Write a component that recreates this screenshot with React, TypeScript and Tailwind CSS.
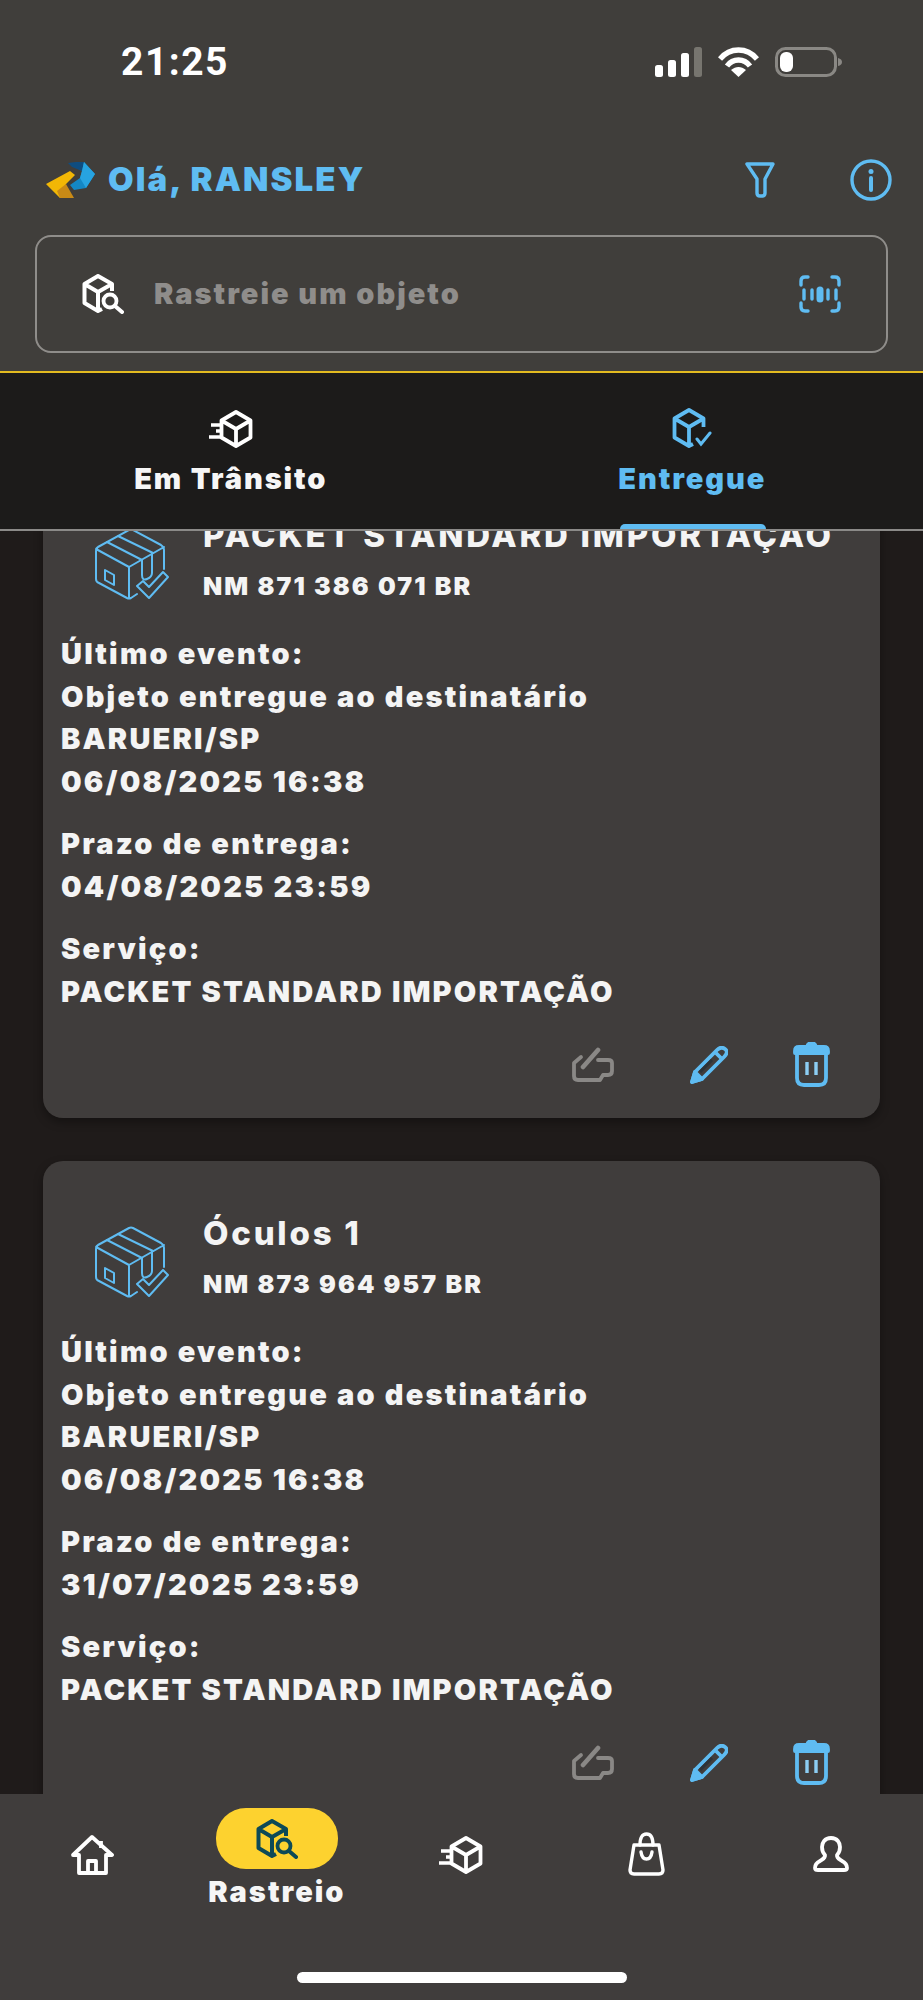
import React from 'react';

const BLUE = '#5fbcf2';

type IconProps = { color?: string; className?: string };

const BoxSearchIcon: React.FC<IconProps> = ({ color = '#fff', className }) => (
  <svg viewBox="0 0 42 40" className={className}>
    <path
      d="M20 35 16 37 2.500 29V10L16 2 30 10V17M2.500 10 16 18 30 10M16 18V37"
      fill="none"
      stroke={color}
      strokeWidth="4"
      strokeLinejoin="round"
    />
    <circle cx="28" cy="27" r="6.500" fill="none" stroke={color} strokeWidth="3.800" />
    <path d="M33 32 40 38" stroke={color} strokeWidth="4" strokeLinecap="round" />
  </svg>
);

const TransitIcon: React.FC<IconProps> = ({ color = '#fff', className }) => (
  <svg viewBox="0 0 44 38" className={className}>
    <path
      d="M27 2 41.500 10.500V27.500L27 36 12.500 27.500V10.500ZM12.500 10.500 27 19 41.500 10.500M27 19V36"
      fill="none"
      stroke={color}
      strokeWidth="3.800"
      strokeLinejoin="round"
    />
    <path d="M2 15H12M7 21H12M0 27H12" stroke={color} strokeWidth="3.400" fill="none" />
  </svg>
);

const DeliveredIcon: React.FC<IconProps> = ({ color = BLUE, className }) => (
  <svg viewBox="0 0 40 40" className={className}>
    <path
      d="M21 36 17 38 2.500 29.500V10.500L17 2 31.500 10.500V19M2.500 10.500 17 19 31.500 10.500M17 19V38"
      fill="none"
      stroke={color}
      strokeWidth="3.800"
      strokeLinejoin="round"
    />
    <path d="M25 31 29 36 38 25" fill="none" stroke={color} strokeWidth="3" strokeLinecap="round" />
  </svg>
);

const FilterIcon: React.FC<IconProps> = ({ className }) => (
  <svg viewBox="0 0 30 36" className={className} fill="none" stroke={BLUE} strokeWidth="3.400" strokeLinejoin="round">
    <path d="M2 2H28L20 17V31Q20 34 17 34H15Q12 34 12 31V17Z" />
  </svg>
);

const InfoIcon: React.FC<IconProps> = ({ className }) => (
  <svg viewBox="0 0 42 42" className={className} fill="none" stroke={BLUE}>
    <circle cx="21" cy="21" r="19" strokeWidth="3.400" />
    <path d="M21 19V31" strokeWidth="4" strokeLinecap="round" />
    <circle cx="21" cy="12.500" r="2.500" fill={BLUE} stroke="none" />
  </svg>
);

const ScanIcon: React.FC<IconProps> = ({ className }) => (
  <svg viewBox="0 0 42 38" className={className} fill="none" stroke={BLUE} strokeWidth="3.400" strokeLinecap="round">
    <path d="M2 10V6Q2 2 6 2H9M33 2H36Q40 2 40 6V10M2 28V32Q2 36 6 36H9M33 36H36Q40 36 40 32V28" />
    <path d="M5 15V24M13 15V24M29 15V24M37 15V24" />
    <path d="M21 15V24" strokeWidth="7" />
  </svg>
);

const LogoIcon: React.FC<IconProps> = ({ className }) => (
  <svg viewBox="0 0 50 38" className={className}>
    <path d="M0 23 24 10 29 14 20 23 14 37Z" fill="#f2b705" />
    <path d="M11 30 20 23 28 37 14 37Z" fill="#c98a16" />
    <path d="M26 4 38 1 49 13 40 27 28 29 24 24 34 17 36 10Z" fill="#1487c4" />
    <path d="M22 2 30 1 38 1 36 10 26 6Z" fill="#0f4d80" />
    <path d="M36 10 38 1 49 13 40 27 34 17Z" fill="#27a3e0" />
  </svg>
);

const SignalIcon: React.FC = () => (
  <svg viewBox="0 0 47 30" className="w-[47px] h-[30px]">
    <rect x="0" y="18" width="8" height="12" rx="2.500" fill="#fff" />
    <rect x="13" y="13" width="8" height="17" rx="2.500" fill="#fff" />
    <rect x="26" y="6" width="8" height="24" rx="2.500" fill="#fff" />
    <rect x="39" y="0" width="8" height="30" rx="2.500" fill="#77756f" />
  </svg>
);

const WifiIcon: React.FC = () => (
  <svg viewBox="0 0 41 30" className="w-[41px] h-[30px]" fill="none" stroke="#fff" strokeWidth="5.400">
    <path d="M2 12C12 0 29 0 39 12" />
    <path d="M9 19C15 11 26 11 32 19" />
    <path d="M20.500 30 13 23C18 19 23 19 28 23Z" fill="#fff" stroke="none" />
  </svg>
);

const BatteryIcon: React.FC = () => (
  <svg viewBox="0 0 67 30" className="w-[67px] h-[30px]" fill="none">
    <rect x="1.500" y="1.500" width="59" height="27" rx="9" stroke="#8a8884" strokeWidth="3" />
    <rect x="5" y="5" width="13" height="20" rx="6" fill="#fff" />
    <path d="M63 11Q67 12 67 15T63 19Z" fill="#8a8884" />
  </svg>
);

const BoxDeliveredIcon: React.FC = () => (
  <svg viewBox="0 0 76 73" className="w-[76px] h-[73px]" fill="none" stroke={BLUE} strokeWidth="2" strokeLinejoin="round" strokeLinecap="round">
    <path d="M36 3Q38 2 40 3L68 18Q71 20 71 23V42M36 3 5 20Q3 21 3 24V52Q3 55 6 56L34 71Q36 72 38 71L44 67M3 22 36 40 71 20M36 40V71" />
    <path d="M14 15 49 33M25 9 60 26" />
    <path d="M49 33V48Q49 54 54 52 59 50 59 46V26" />
    <path d="M12 43 21 48V58L12 53Z" />
    <path d="M44 59 50 54 56 60 70 45 75 50 56 71Z" />
  </svg>
);

const ThumbIcon: React.FC<IconProps> = ({ className }) => (
  <svg viewBox="0 0 43 35" className={className} fill="none" stroke="#8a8886" strokeWidth="3.800" strokeLinejoin="round" strokeLinecap="round">
    <path d="M12 20 27 3" strokeWidth="4.600" />
    <path d="M10 10 3 16V29Q3 33 7 33H29L32 28H37Q41 28 41 24V16Q41 13 37 13H27" />
  </svg>
);

const PencilIcon: React.FC<IconProps> = ({ className }) => (
  <svg viewBox="0 0 38 38" className={className} fill="none" stroke={BLUE} strokeWidth="3.800" strokeLinejoin="round">
    <path d="M2 36 5 26 27 4Q31 0 35 3T34 11L12 33Z" />
    <path d="M2 36 5 26 12 33Z" fill={BLUE} />
    <path d="M26 7 31 12" />
    <path d="M10 26 22 14" stroke="#2c3338" strokeWidth="3" />
  </svg>
);

const TrashIcon: React.FC<IconProps> = ({ className }) => (
  <svg viewBox="0 0 37 45" className={className} fill="none" stroke={BLUE} strokeWidth="3.800" strokeLinejoin="round">
    <path d="M2 11V9Q2 5 6 5H14Q15 1 18.500 1T23 5H31Q35 5 35 9V11Z" fill={BLUE} />
    <path d="M4 11V36Q4 43 11 43H26Q33 43 33 36V11" />
    <path d="M14 20V33M23 20V33" stroke="#8ccdf3" strokeWidth="3.400" />
  </svg>
);

const HomeIcon: React.FC<IconProps> = ({ className }) => (
  <svg viewBox="0 0 43 40" className={className} fill="none" stroke="#fff" strokeWidth="3.800" strokeLinejoin="round">
    <path d="M8 38V20H2L21 2 41 20H35V38Z" />
    <path d="M17 38V26H25V38" />
    <path d="M30 6V13" />
  </svg>
);

const BagIcon: React.FC<IconProps> = ({ className }) => (
  <svg viewBox="0 0 37 44" className={className} fill="none" stroke="#fff" strokeWidth="3.400" strokeLinecap="round" strokeLinejoin="round">
    <path d="M6 13H31L35 38Q35 42 31 42H6Q2 42 2 38Z" />
    <path d="M12 13Q12 2 18.500 2T25 13" />
    <path d="M13 20Q14 27 18.500 27T24 20" />
  </svg>
);

const UserIcon: React.FC<IconProps> = ({ className }) => (
  <svg viewBox="0 0 36 38" className={className} fill="none" stroke="#fff" strokeWidth="3.800" strokeLinejoin="round">
    <path d="M18 3C24.500 3 27 8 27 12 27 16 25 19 24 20 23.500 23 26 24 29 26 33 28 34 31 34 33 34 35 33 35 31 35H5C3 35 2 35 2 33 2 31 3 28 7 26 10 24 12.500 23 12 20 11 19 9 16 9 12 9 8 11.500 3 18 3Z" />
  </svg>
);

type Delivery = {
  title: string;
  code: string;
  prazo: string;
};

const deliveries: Delivery[] = [
  { title: 'PACKET STANDARD IMPORTAÇÃO', code: 'NM 871 386 071 BR', prazo: '04/08/2025 23:59' },
  { title: 'Óculos 1', code: 'NM 873 964 957 BR', prazo: '31/07/2025 23:59' },
];

const DeliveryCard: React.FC<{ item: Delivery }> = ({ item }) => (
  <div className="shrink-0 h-[655px] rounded-[20px] bg-[#403d3c] shadow-[0_4px_10px_rgba(0,0,0,0.35)] pt-[52px] pl-[18px] pr-[18px]">
    <div className="flex pl-[32px]">
      <div className="mt-[12px] w-[110px] shrink-0">
        <BoxDeliveredIcon />
      </div>
      <div>
        <div className="h-[40px] leading-[40px] text-[33px] font-extrabold tracking-[2.750px] text-[#f4f4f4] whitespace-nowrap">{item.title}</div>
        <div className="mt-[10px] h-[42px] leading-[42px] text-[25px] font-black tracking-[2.100px] text-[#f4f4f4]">{item.code}</div>
      </div>
    </div>

    <div className="mt-[26px] text-[29px] font-black leading-[42.500px] tracking-[2.200px] text-[#f4f4f4]">
      <p>Último evento:</p>
      <p>Objeto entregue ao destinatário</p>
      <p>BARUERI/SP</p>
      <p>06/08/2025 16:38</p>
      <p className="mt-[20px]">Prazo de entrega:</p>
      <p>{item.prazo}</p>
      <p className="mt-[20px]">Serviço:</p>
      <p>PACKET STANDARD IMPORTAÇÃO</p>
    </div>

    <div className="mt-[29px] flex items-center justify-end pr-[32px]">
      <ThumbIcon className="w-[43px] h-[35px]" />
      <PencilIcon className="ml-[76px] w-[38px] h-[38px]" />
      <TrashIcon className="ml-[65px] w-[37px] h-[45px]" />
    </div>
  </div>
);

const App: React.FC = () => {
  return (
    <div className="h-[2000px] w-[923px] overflow-hidden flex flex-col bg-[#1f1b1a] font-['Inter',sans-serif]">
      <header className="shrink-0 h-[373px] bg-[#403e3b] border-b-2 border-[#e3bb20]">
        <div className="flex items-center justify-between pt-[47px] pl-[121px] pr-[81px] h-[77px]">
          <span className="font-['Roboto',sans-serif] text-[39px] leading-[30px] font-bold tracking-[1.500px] text-white">21:25</span>
          <div className="flex items-center">
            <SignalIcon />
            <div className="ml-[16px]">
              <WifiIcon />
            </div>
            <div className="ml-[16px]">
              <BatteryIcon />
            </div>
          </div>
        </div>

        <div className="mt-[82px] h-[42px] flex items-center pl-[46px] pr-[31px]">
          <LogoIcon className="w-[50px] h-[38px]" />
          <span className="ml-[12px] text-[33px] font-black tracking-[2.100px] text-[#5fbcf2]">Olá, RANSLEY</span>
          <div className="ml-auto flex items-center">
            <FilterIcon className="w-[30px] h-[36px]" />
            <InfoIcon className="ml-[75px] w-[42px] h-[42px]" />
          </div>
        </div>

        <div className="mt-[34px] mx-[35px] h-[118px] rounded-[16px] border-2 border-[#8f8d8a] flex items-center pl-[45px] pr-[45px]">
          <BoxSearchIcon className="w-[42px] h-[40px]" />
          <span className="ml-[30px] text-[29px] font-black tracking-[2px] text-[#8f8d8b]">Rastreie um objeto</span>
          <ScanIcon className="ml-auto w-[42px] h-[38px]" />
        </div>
      </header>

      <nav className="relative z-10 shrink-0 h-[158px] grid grid-cols-2 bg-[#1c1b1a] border-b-2 border-[#8b8a88]">
        <div className="flex flex-col items-center pt-[37px]">
          <TransitIcon className="w-[44px] h-[38px]" />
          <span className="mt-[12px] text-[29px] leading-[38px] font-black tracking-[1.900px] text-[#f6f6f6]">Em Trânsito</span>
        </div>
        <div className="relative flex flex-col items-center pt-[35px]">
          <DeliveredIcon className="w-[40px] h-[40px]" />
          <span className="mt-[12px] text-[29px] leading-[38px] font-black tracking-[1.900px] text-[#5fbcf2]">Entregue</span>
          <span className="absolute bottom-0 left-[158px] w-[146px] h-[5px] rounded-t-[5px] bg-[#5fbcf2]" />
        </div>
      </nav>

      <main className="flex-1 min-h-0 overflow-hidden px-[43px]">
        <div className="-mt-[68px] flex flex-col gap-[43px]">
          {deliveries.map((item) => (
            <DeliveryCard key={item.code} item={item} />
          ))}
        </div>
      </main>

      <footer className="shrink-0 h-[206px] bg-[#403d3c] flex flex-col">
        <div className="grid grid-cols-5 pt-[14px]">
          <div className="flex justify-center pt-[27px]">
            <HomeIcon className="w-[43px] h-[40px]" />
          </div>
          <div className="flex flex-col items-center">
            <div className="w-[122px] h-[61px] rounded-[30px] bg-[#fdd22f] flex items-center justify-center">
              <BoxSearchIcon color="#0d4a57" className="w-[42px] h-[40px]" />
            </div>
            <span className="mt-[5px] text-[29px] leading-[36px] font-black tracking-[2px] text-[#f6f6f6]">Rastreio</span>
          </div>
          <div className="flex justify-center pt-[28px]">
            <TransitIcon className="w-[44px] h-[38px]" />
          </div>
          <div className="flex justify-center pt-[24px]">
            <BagIcon className="w-[37px] h-[44px]" />
          </div>
          <div className="flex justify-center pt-[27px]">
            <UserIcon className="w-[36px] h-[38px]" />
          </div>
        </div>
        <div className="mt-auto mb-[17px] mx-auto w-[330px] h-[11px] rounded-full bg-white" />
      </footer>
    </div>
  );
};

export default App;
